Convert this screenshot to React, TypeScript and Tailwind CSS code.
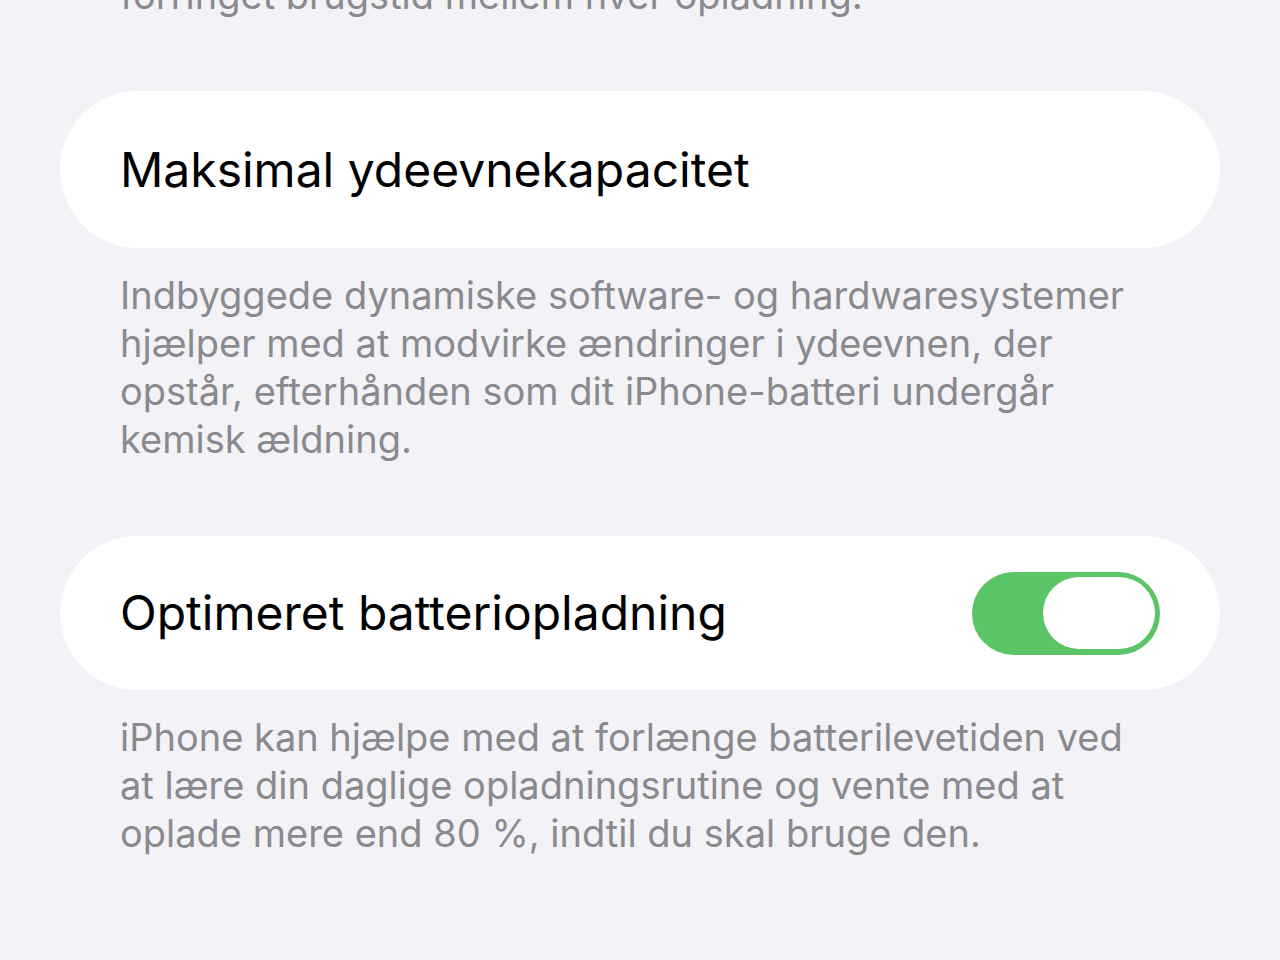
import React, { useState } from "react";

const font = { fontFamily: "Inter, 'Noto Sans', sans-serif" };

function Toggle({ on, onChange }: { on: boolean; onChange: () => void }) {
  return (
    <button
      type="button"
      role="switch"
      aria-checked={on}
      onClick={onChange}
      className={`flex h-[83px] w-[188px] shrink-0 items-center rounded-full px-[5px] ${
        on ? "justify-end bg-[#5bc466]" : "justify-start bg-[#e9e9eb]"
      }`}
    >
      <span className="h-[72px] w-[112px] rounded-full bg-white" />
    </button>
  );
}

function Footer({ children, className = "" }: { children: React.ReactNode; className?: string }) {
  return (
    <p className={`px-[60px] text-[38px] leading-[48px] text-[#8a8a8e] ${className}`}>{children}</p>
  );
}

export default function App() {
  const [optimized, setOptimized] = useState(true);

  return (
    <div style={font} className="h-[960px] overflow-hidden bg-[#f2f2f7] px-[60px]">
      <Footer className="-mt-[29px]">forringet brugstid mellem hver opladning.</Footer>

      <div className="mt-[72px] flex h-[157px] items-center rounded-[78px] bg-white px-[60px]">
        <span className="text-[48px] text-black">Maksimal ydeevnekapacitet</span>
      </div>
      <Footer className="mt-[23px]">
        Indbyggede dynamiske software- og hardwaresystemer hjælper med at modvirke ændringer i
        ydeevnen, der opstår, efterhånden som dit iPhone-batteri undergår kemisk ældning.
      </Footer>

      <div className="mt-[73px] flex h-[154px] items-center justify-between rounded-[77px] bg-white pl-[60px] pr-[60px]">
        <span className="text-[48px] text-black">Optimeret batteriopladning</span>
        <Toggle on={optimized} onChange={() => setOptimized((o) => !o)} />
      </div>
      <Footer className="mt-[23px]">
        iPhone kan hjælpe med at forlænge batterilevetiden ved at lære din daglige
        opladningsrutine og vente med at oplade mere end 80 %, indtil du skal bruge den.
      </Footer>
    </div>
  );
}
